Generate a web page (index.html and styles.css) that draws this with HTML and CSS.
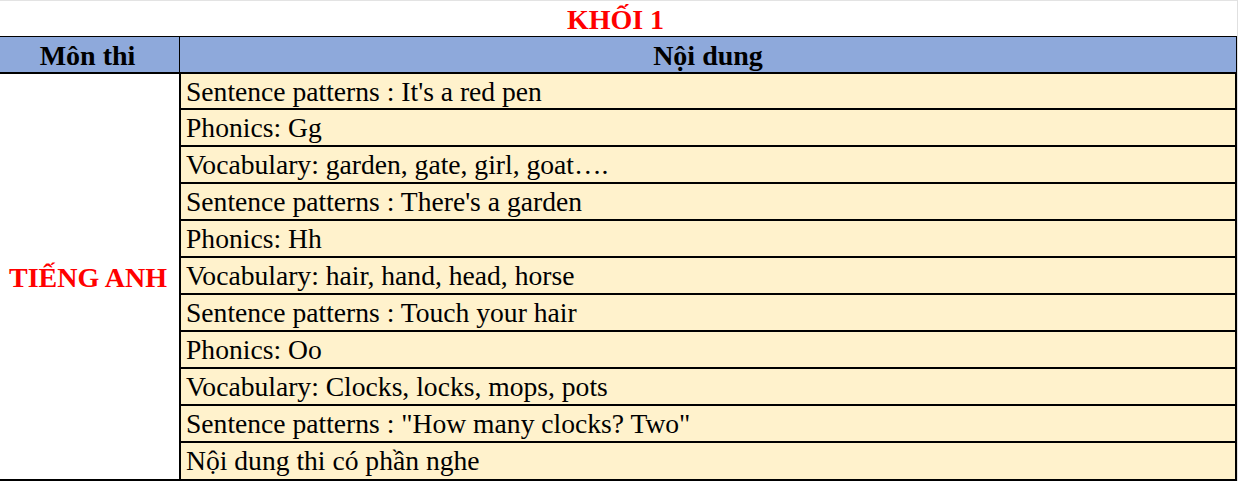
FILE: index.html
```html
<!DOCTYPE html>
<html lang="vi">
<head>
<meta charset="utf-8">
<title>KHỐI 1</title>
<link rel="stylesheet" href="styles.css">
</head>
<body>
<div class="sheet">
  <div class="title-row"><span class="title">KHỐI 1</span></div>
  <div class="head">
    <div class="hcell hcell-left">Môn thi</div>
    <div class="hcell">Nội dung</div>
  </div>
  <div class="body">
    <div class="subject">TIẾNG ANH</div>
    <div class="rows">
      <div class="row">Sentence patterns : It's a red pen</div>
      <div class="row">Phonics: Gg</div>
      <div class="row">Vocabulary: garden, gate, girl, goat….</div>
      <div class="row">Sentence patterns : There's a garden</div>
      <div class="row">Phonics: Hh</div>
      <div class="row">Vocabulary: hair, hand, head, horse</div>
      <div class="row">Sentence patterns : Touch your hair</div>
      <div class="row">Phonics: Oo</div>
      <div class="row">Vocabulary: Clocks, locks, mops, pots</div>
      <div class="row">Sentence patterns : "How many clocks? Two"</div>
      <div class="row">Nội dung thi có phần nghe</div>
    </div>
  </div>
</div>
</body>
</html>
```

FILE: styles.css
```css
html, body {
  margin: 0;
  padding: 0;
  background: #ffffff;
}

body {
  font-family: "Liberation Serif", "Times New Roman", serif;
  color: #000000;
  width: 1240px;
  height: 483px;
  overflow: hidden;
}

.sheet {
  width: 1237px;
  border-right: 1px solid #e0e0e0;
}

.title-row {
  height: 35px;
  border-top: 1px solid #e3e3e3;
  display: flex;
  align-items: center;
  justify-content: center;
}

.title {
  color: #ff0000;
  font-weight: bold;
  font-size: 28px;
  line-height: 1;
  padding-top: 2px;
  padding-right: 6px;
}

.head {
  display: grid;
  grid-template-columns: 180px 1fr;
  background: #8ea9db;
  border-top: 1px solid #000000;
  border-bottom: 2px solid #000000;
  border-right: 1px solid #000000;
  height: 35px;
}

.hcell {
  display: flex;
  align-items: center;
  justify-content: center;
  font-weight: bold;
  font-size: 28px;
  line-height: 1;
  padding-top: 3px;
}

.hcell-left {
  border-right: 1px solid #000000;
  padding-right: 4px;
}

.body {
  display: grid;
  grid-template-columns: 179px 1fr;
  border-bottom: 2px solid #000000;
}

.subject {
  display: flex;
  align-items: center;
  justify-content: center;
  color: #ff0000;
  font-weight: bold;
  font-size: 28px;
  padding-right: 3px;
  padding-top: 2px;
}

.rows {
  display: flex;
  flex-direction: column;
  border-left: 2px solid #000000;
  border-right: 2px solid #000000;
}

.row {
  height: 36px;
  box-sizing: border-box;
  background: #fff2cc;
  font-size: 27.6px;
  line-height: 34px;
  padding-left: 5px;
  padding-top: 1px;
  border-bottom: 2px solid #000000;
  white-space: nowrap;
}

.row + .row {
  height: 37px;
}

.row:last-child {
  height: 36px;
  border-bottom: none;
}
```
